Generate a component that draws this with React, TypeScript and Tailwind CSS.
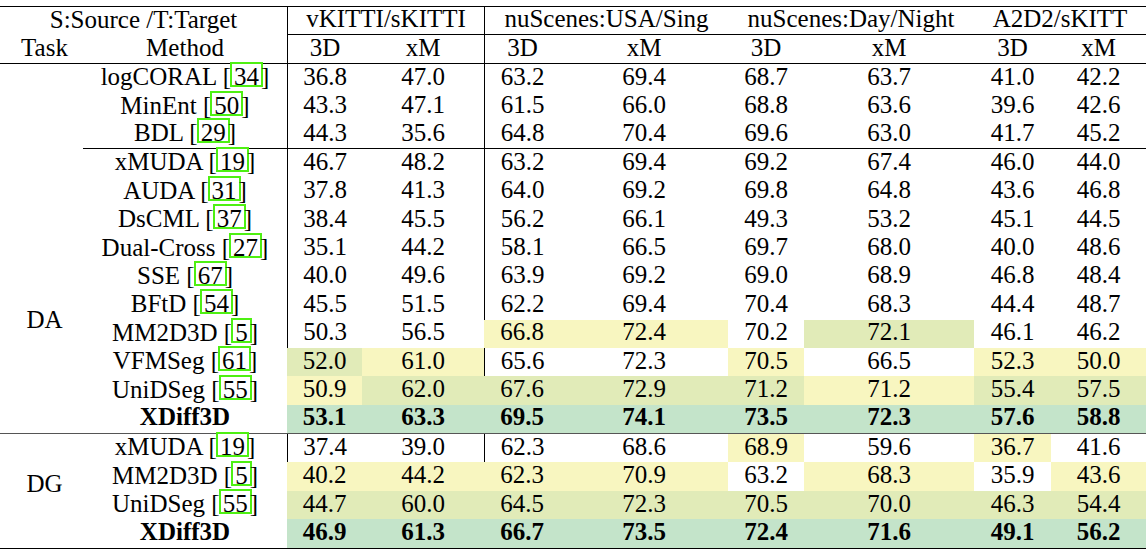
import type { ReactNode } from 'react';

type Tone = 'y' | 'g' | 't' | '';

interface Row {
  method: string;
  cite?: string;
  cells: [string, Tone][];
  bold?: boolean;
  ruleBelow?: boolean;
}

const TONE_BG: Record<Tone, string> = {
  y: 'bg-[#f8f6c0]',
  g: 'bg-[#e1ebb8]',
  t: 'bg-[#c4e4ca]',
  '': '',
};

const COLS = 'grid grid-cols-[83px_204px_75px_122px_76px_168px_76px_170px_77px_95px]';

// plain rows: no highlighted cells
const w = (...v: string[]): [string, Tone][] => v.map((x) => [x, ''] as [string, Tone]);

const DA_ROWS: Row[] = [
  { method: 'logCORAL', cite: '34', cells: w('36.8', '47.0', '63.2', '69.4', '68.7', '63.7', '41.0', '42.2') },
  { method: 'MinEnt', cite: '50', cells: w('43.3', '47.1', '61.5', '66.0', '68.8', '63.6', '39.6', '42.6') },
  { method: 'BDL', cite: '29', cells: w('44.3', '35.6', '64.8', '70.4', '69.6', '63.0', '41.7', '45.2'), ruleBelow: true },
  { method: 'xMUDA', cite: '19', cells: w('46.7', '48.2', '63.2', '69.4', '69.2', '67.4', '46.0', '44.0') },
  { method: 'AUDA', cite: '31', cells: w('37.8', '41.3', '64.0', '69.2', '69.8', '64.8', '43.6', '46.8') },
  { method: 'DsCML', cite: '37', cells: w('38.4', '45.5', '56.2', '66.1', '49.3', '53.2', '45.1', '44.5') },
  { method: 'Dual-Cross', cite: '27', cells: w('35.1', '44.2', '58.1', '66.5', '69.7', '68.0', '40.0', '48.6') },
  { method: 'SSE', cite: '67', cells: w('40.0', '49.6', '63.9', '69.2', '69.0', '68.9', '46.8', '48.4') },
  { method: 'BFtD', cite: '54', cells: w('45.5', '51.5', '62.2', '69.4', '70.4', '68.3', '44.4', '48.7') },
  {
    method: 'MM2D3D',
    cite: '5',
    cells: [['50.3', ''], ['56.5', ''], ['66.8', 'y'], ['72.4', 'y'], ['70.2', ''], ['72.1', 'g'], ['46.1', ''], ['46.2', '']],
  },
  {
    method: 'VFMSeg',
    cite: '61',
    cells: [['52.0', 'g'], ['61.0', 'y'], ['65.6', ''], ['72.3', ''], ['70.5', 'y'], ['66.5', ''], ['52.3', 'y'], ['50.0', 'y']],
  },
  {
    method: 'UniDSeg',
    cite: '55',
    cells: [['50.9', 'y'], ['62.0', 'g'], ['67.6', 'g'], ['72.9', 'g'], ['71.2', 'g'], ['71.2', 'y'], ['55.4', 'g'], ['57.5', 'g']],
  },
  {
    method: 'XDiff3D',
    bold: true,
    cells: [['53.1', 't'], ['63.3', 't'], ['69.5', 't'], ['74.1', 't'], ['73.5', 't'], ['72.3', 't'], ['57.6', 't'], ['58.8', 't']],
  },
];

const DG_ROWS: Row[] = [
  {
    method: 'xMUDA',
    cite: '19',
    cells: [['37.4', ''], ['39.0', ''], ['62.3', ''], ['68.6', ''], ['68.9', 'y'], ['59.6', ''], ['36.7', 'y'], ['41.6', '']],
  },
  {
    method: 'MM2D3D',
    cite: '5',
    cells: [['40.2', 'y'], ['44.2', 'y'], ['62.3', 'y'], ['70.9', 'y'], ['63.2', ''], ['68.3', 'y'], ['35.9', ''], ['43.6', 'y']],
  },
  {
    method: 'UniDSeg',
    cite: '55',
    cells: [['44.7', 'g'], ['60.0', 'g'], ['64.5', 'g'], ['72.3', 'g'], ['70.5', 'g'], ['70.0', 'g'], ['46.3', 'g'], ['54.4', 'g']],
  },
  {
    method: 'XDiff3D',
    bold: true,
    cells: [['46.9', 't'], ['61.3', 't'], ['66.7', 't'], ['73.5', 't'], ['72.4', 't'], ['71.6', 't'], ['49.1', 't'], ['56.2', 't']],
  },
];

function Cite({ n }: { n: string }) {
  return (
    <>
      {' '}[
      <span className="inline-block h-[25px] leading-[25px] border-2 border-[#4ef012] px-[2px] -ml-[1px]">{n}</span>
      <span className="-ml-[2px]">]</span>
    </>
  );
}

function Cell({ children, className = '' }: { children?: ReactNode; className?: string }) {
  return <div className={`flex items-center justify-center pb-[3px] whitespace-nowrap ${className}`}>{children}</div>;
}

function Section({
  rows,
  label,
  labelClass,
  className,
}: {
  rows: Row[];
  label: string;
  labelClass: string;
  className: string;
}) {
  return (
    <div className={`${COLS} auto-rows-[28.4px] ${className}`}>
      <div className={`col-start-1 flex justify-center pl-[6px] leading-[28.4px] ${labelClass}`}>{label}</div>
      {rows.map((row) => {
        const rule = row.ruleBelow ? 'border-b border-black' : '';
        const weight = row.bold ? 'font-bold' : '';
        return [
          <Cell key={row.method + 'm'} className={`${rule} ${weight}`}>
            <span>
              {row.method}
              {row.cite && <Cite n={row.cite} />}
            </span>
          </Cell>,
          ...row.cells.map(([v, tone], i) => {
            const lined = (i === 0 || i === 2) && tone === '' ? 'border-l border-black' : '';
            return (
              <Cell key={row.method + i} className={`${TONE_BG[tone]} ${lined} ${rule} ${weight}`}>
                {v}
              </Cell>
            );
          }),
        ];
      })}
    </div>
  );
}

export default function App() {
  return (
    <div className="w-[1148px] h-[554px] overflow-hidden bg-white pt-[6px] text-[25px] leading-[28px] text-black font-['Liberation_Serif',serif]">
      <div className="w-[1146px] border-t border-black">
        <div className={`${COLS} grid-rows-[28px_29px]`}>
          <Cell className="col-span-2">S:Source /T:Target</Cell>
          <Cell className="col-span-2 border-l border-b border-black">vKITTI/sKITTI</Cell>
          <Cell className="col-span-2 border-l border-b border-black">nuScenes:USA/Sing</Cell>
          <Cell className="col-span-2 border-b border-black">nuScenes:Day/Night</Cell>
          <Cell className="col-span-2 border-b border-black">A2D2/sKITT</Cell>

          <Cell className="border-b border-black pl-[6px]">Task</Cell>
          <Cell className="border-b border-black">Method</Cell>
          <Cell className="border-b border-l border-black">3D</Cell>
          <Cell className="border-b border-black">xM</Cell>
          <Cell className="border-b border-l border-black">3D</Cell>
          <Cell className="border-b border-black">xM</Cell>
          <Cell className="border-b border-black">3D</Cell>
          <Cell className="border-b border-black">xM</Cell>
          <Cell className="border-b border-black">3D</Cell>
          <Cell className="border-b border-black">xM</Cell>
        </div>
        <Section rows={DA_ROWS} label="DA" labelClass="row-span-13 pt-[242px]" className="border-b border-[#555]" />
        <Section rows={DG_ROWS} label="DG" labelClass="row-span-4 pt-[36px]" className="border-b-[1.5px] border-black" />
      </div>
    </div>
  );
}
